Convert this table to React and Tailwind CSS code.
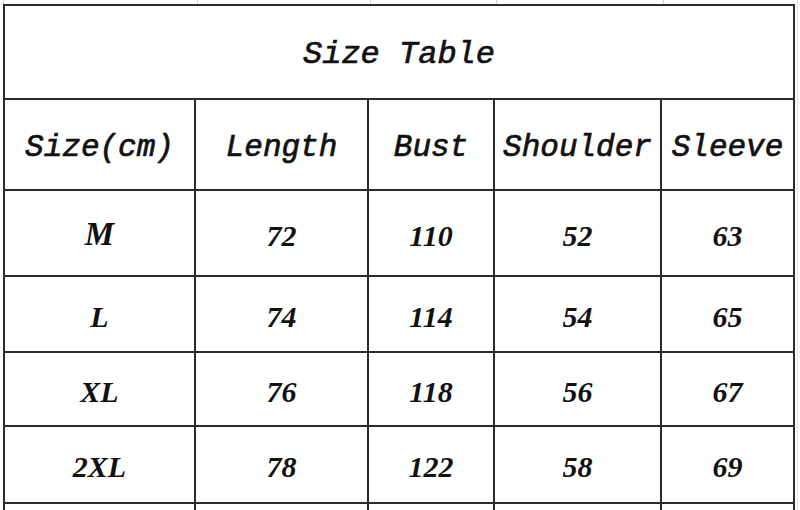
const rows = [
  { size: "M", big: true, values: ["72", "110", "52", "63"], h: "h-[84px]" },
  { size: "L", values: ["74", "114", "54", "65"], h: "h-[74px]" },
  { size: "XL", values: ["76", "118", "56", "67"], h: "h-[72px]" },
  { size: "2XL", values: ["78", "122", "58", "69"], h: "h-[75px]" },
];

const headers = ["Size(cm)", "Length", "Bust", "Shoulder", "Sleeve"];

const cols = "grid-cols-[189px_171px_124px_165px_131px]";

function HeadCell({ children }) {
  return (
    <div className="h-[89px] pt-[8px] bg-white flex items-center justify-center font-['Liberation_Mono',monospace] italic text-[31px] text-[#111] [-webkit-text-stroke:0.7px_#111] whitespace-pre">
      {children}
    </div>
  );
}

function Cell({ children, className = "" }) {
  return (
    <div
      className={`bg-white pt-[4px] flex items-center justify-center font-['Liberation_Serif',serif] italic font-bold text-[#111] ${className}`}
    >
      {children}
    </div>
  );
}

export default function App() {
  return (
    <div className="w-[800px] h-[510px] overflow-hidden bg-white flex">
      <div className="ml-[3px] flex flex-col">
        {/* gridlines of the sheet above the table */}
        <div className="h-[4px] shrink-0 w-[792px] grid grid-cols-[195px_173px_126px_167px_131px]">
          <div className="border-l border-r border-[#cfcfcf]" />
          <div className="border-r border-[#cfcfcf]" />
          <div className="border-r border-[#cfcfcf]" />
          <div className="border-r border-[#cfcfcf]" />
          <div />
        </div>

        <div className={`grid shrink-0 ${cols} gap-[2px] bg-[#2b2b2b] p-[2px] w-fit`}>
          <div className="col-span-5 h-[92px] bg-white flex items-center justify-center font-['Liberation_Mono',monospace] italic text-[32px] text-[#111] [-webkit-text-stroke:0.7px_#111] whitespace-pre pt-[6px]">
            Size Table
          </div>

          {headers.map((h) => (
            <HeadCell key={h}>{h}</HeadCell>
          ))}

          {rows.map((r) => (
            <div key={r.size} className="contents">
              <Cell className={`${r.h} ${r.big ? "text-[33px]" : "text-[30px]"}`}>
                {r.size}
              </Cell>
              {r.values.map((v, i) => (
                <Cell key={i} className={`${r.h} text-[30px]`}>
                  {v}
                </Cell>
              ))}
            </div>
          ))}

          {/* next row, cut off by the window */}
          {[0, 1, 2, 3, 4].map((i) => (
            <div key={i} className="h-[20px] bg-white" />
          ))}
        </div>
      </div>
      <div className="ml-[2px] w-px h-full bg-[#e2e2e2]" />
    </div>
  );
}
